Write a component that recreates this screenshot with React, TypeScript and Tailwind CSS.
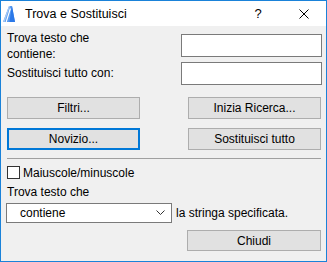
import React from 'react'

const FONT = "font-['Liberation_Sans',Arial,sans-serif]"

function AppIcon(): React.ReactElement {
  return (
    <svg width="12" height="16" viewBox="0 0 12 16" className="shrink-0">
      <polygon points="0,16 6,0 9,0 12,16" fill="#5a9cf0" />
      <polygon points="6.5,16 8.3,3 9,0 12,16" fill="#2b78e8" />
      <polygon points="0,16 6,0 7,0 1.6,16" fill="#a9cbf5" />
      <line x1="3.2" y1="16" x2="7.4" y2="2.5" stroke="#ffffff" strokeWidth="1.2" />
    </svg>
  )
}

function Btn({ label, focused }: { label: string; focused?: boolean }): React.ReactElement {
  return (
    <div
      className={`w-[133px] h-[22px] flex items-center justify-center bg-[#e1e1e1] ${
        focused ? 'border-2 border-[#0078d7]' : 'border border-[#adadad]'
      }`}
    >
      {label}
    </div>
  )
}

export default function App(): React.ReactElement {
  return (
    <div className={`w-[327px] h-[262px] border border-[#1a82d9] bg-[#f0f0f0] flex flex-col text-[12px] leading-[16px] text-black ${FONT}`}>
      {/* title bar */}
      <div className="h-[25px] shrink-0 bg-white flex items-center">
        <div className="ml-[2px] mt-[1px]">
          <AppIcon />
        </div>
        <span className="ml-[10px] text-[12.5px] text-black">Trova e Sostituisci</span>
        <div className="flex-1" />
        <div className="w-[46px] h-full flex items-center justify-center text-[13px]">?</div>
        <div className="w-[45px] h-full flex items-center justify-center">
          <svg width="10" height="10" viewBox="0 0 10 10">
            <path d="M0.5 0.5 L9.5 9.5 M9.5 0.5 L0.5 9.5" stroke="#000" strokeWidth="1" />
          </svg>
        </div>
      </div>

      {/* body */}
      <div className="flex-1 flex flex-col pl-[5px] pr-[4px]">
        <div className="flex mt-[4px]">
          <div className="w-[110px] pl-[1px]">Trova testo che contiene:</div>
          <div className="ml-auto mt-[4px] w-[141px] h-[23px] bg-white border border-[#7a7a7a]" />
        </div>
        <div className="flex items-center">
          <div className="pl-[1px] -mt-[2px]">Sostituisci tutto con:</div>
          <div className="ml-auto w-[141px] h-[23px] bg-white border border-[#7a7a7a]" />
        </div>

        <div className="flex justify-between px-[1px] mt-[12px]">
          <Btn label="Filtri..." />
          <Btn label="Inizia Ricerca..." />
        </div>
        <div className="flex justify-between px-[1px] mt-[9px]">
          <Btn label="Novizio..." focused />
          <Btn label="Sostituisci tutto" />
        </div>

        <div className="mx-[1px] mt-[8px] h-px bg-[#a0a0a0]" />

        <div className="flex items-center h-[15px] mt-[6px] pl-[1px]">
          <div className="w-[13px] h-[13px] bg-white border border-[#333333]" />
          <span className="ml-[3px]">Maiuscole/minuscole</span>
        </div>

        <div className="mt-[4px] pl-[1px]">Trova testo che</div>

        <div className="flex items-center mt-[3px]">
          <div className="w-[166px] h-[20px] bg-white border border-[#7a7a7a] flex items-center pl-[13px] pr-[6px]">
            <span className="flex-1">contiene</span>
            <svg width="9" height="6" viewBox="0 0 9 6">
              <path d="M0.5 0.5 L4.5 4.5 L8.5 0.5" stroke="#333" strokeWidth="1" fill="none" />
            </svg>
          </div>
          <span className="ml-[4px]">la stringa specificata.</span>
        </div>

        <div className="flex justify-end pr-[1px] mt-[7px]">
          <div className="w-[134px] h-[21px] flex items-center justify-center bg-[#e1e1e1] border border-[#adadad]">
            Chiudi
          </div>
        </div>
      </div>
    </div>
  )
}
